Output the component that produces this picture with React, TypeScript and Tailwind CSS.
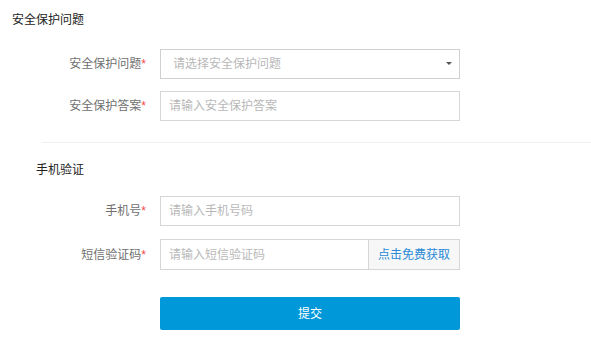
export default function App() {
  const font = { fontFamily: '"Liberation Sans", "Noto Sans CJK SC", sans-serif' };

  const label = (text: string) => (
    <div className="w-[160px] pr-[14px] text-right text-[12px] text-[#707070]">
      {text}
      <span className="text-[#f04848]">*</span>
    </div>
  );

  return (
    <div className="h-[347px] w-[591px] bg-white" style={font}>
      <div className="pl-[12px] pt-[13px] text-[12px] leading-[14px] text-[#222]">安全保护问题</div>

      <div className="mt-[22px] flex flex-col gap-[12px]">
        <div className="flex items-center">
          {label("安全保护问题")}
          <div className="flex h-[30px] w-[300px] items-center justify-between border border-[#d0d0d0] pl-[12px] pr-[6px]">
            <span className="text-[12px] text-[#b8b8b8]">请选择安全保护问题</span>
            <svg width="6" height="4" viewBox="0 0 6 4" className="mr-[1px]">
              <path d="M0 0h6L3 3z" fill="#555" />
            </svg>
          </div>
        </div>
        <div className="flex items-center">
          {label("安全保护答案")}
          <div className="flex h-[30px] w-[300px] items-center border border-[#d6d6d6] pl-[8px] text-[12px] text-[#b8b8b8]">
            请输入安全保护答案
          </div>
        </div>
      </div>

      <div className="ml-[42px] mt-[21px] h-px bg-[#eef0f4]" />

      <div className="pl-[36px] pt-[20px] text-[12px] leading-[14px] text-[#222]">手机验证</div>

      <div className="mt-[19px] flex flex-col gap-[13px]">
        <div className="flex items-center">
          {label("手机号")}
          <div className="flex h-[30px] w-[300px] items-center border border-[#d6d6d6] pl-[8px] text-[12px] text-[#b8b8b8]">
            请输入手机号码
          </div>
        </div>
        <div className="flex items-center">
          {label("短信验证码")}
          <div className="flex h-[31px] w-[300px] border border-[#d6d6d6]">
            <div className="flex flex-1 items-center pl-[8px] text-[12px] text-[#b8b8b8]">请输入短信验证码</div>
            <div className="flex w-[91px] items-center justify-center border-l border-[#d6d6d6] bg-[#f7f7f7] text-[12px] text-[#2a8ad6]">
              点击免费获取
            </div>
          </div>
        </div>
      </div>

      <div className="ml-[160px] mt-[27px] flex h-[33px] w-[300px] items-center justify-center rounded-[2px] bg-[#0098d9] text-[12px] text-white">
        提交
      </div>
    </div>
  );
}
